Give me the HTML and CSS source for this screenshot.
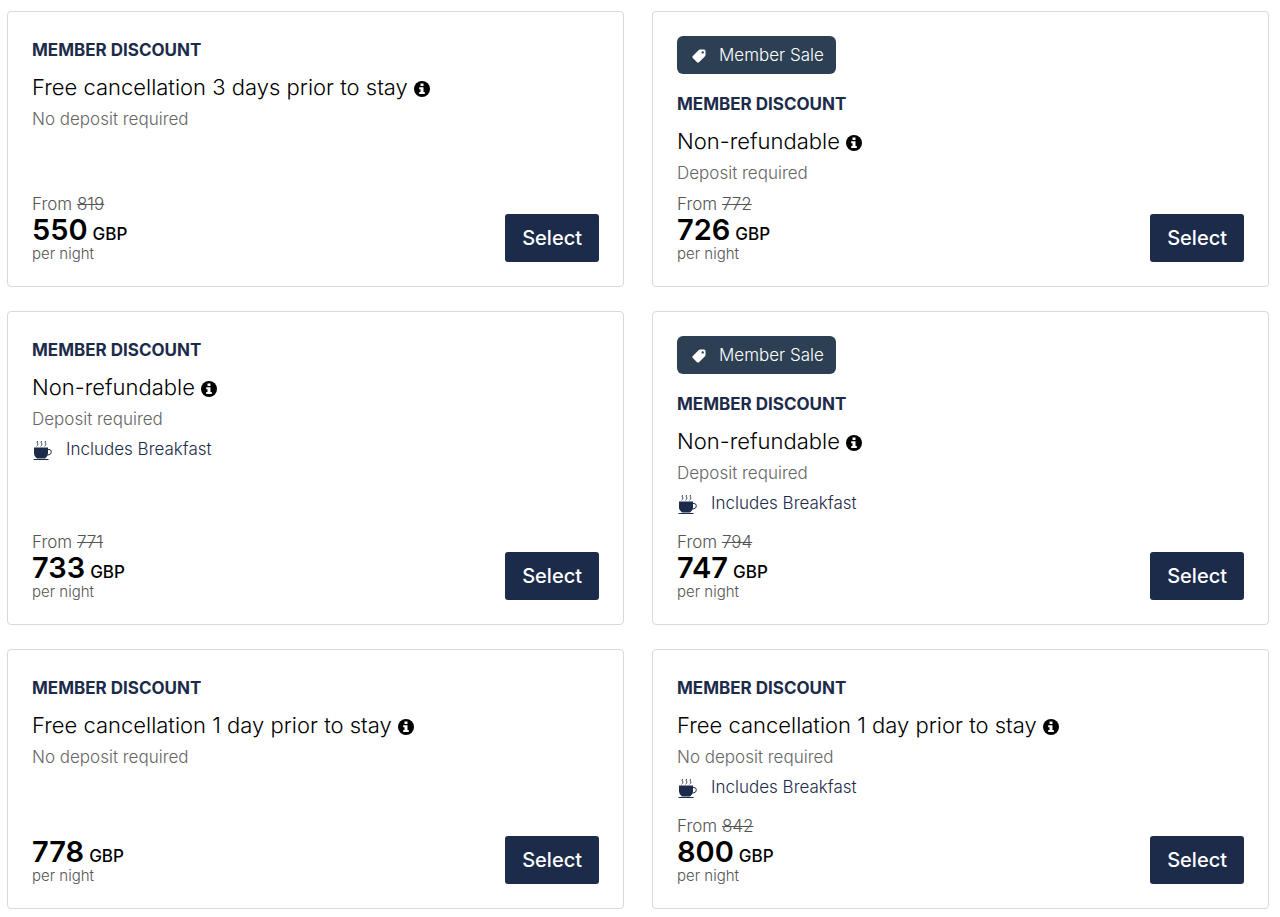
FILE: index.html
```html
<!DOCTYPE html>
<html lang="en">
<head>
<meta charset="utf-8">
<meta name="viewport" content="width=device-width, initial-scale=1">
<title>Room rates</title>
<link rel="stylesheet" href="styles.css">
</head>
<body>
<svg class="sprite" aria-hidden="true">
  <symbol id="info" viewBox="0 0 16 16">
    <circle cx="8" cy="8" r="8" fill="#000"/>
    <path d="M6.500 2.500h3v2.400h-3zM5.200 6.200h4.300v4.900h1.300v2H5.200v-2h1.300V8.200H5.200z" fill="#fff"/>
  </symbol>
  <symbol id="tag" viewBox="0 0 14 14">
    <path fill="#fff" fill-rule="evenodd" d="M8 .6h4q1.500 0 1.500 1.500v4q0 .6-.5 1.200l-6 6q-1 .9-2 0L.8 9q-.9-1 0-2l6-6Q7.300.6 8 .6ZM10.700 2.200a1.200 1.200 0 1 0 0 2.400 1.200 1.200 0 0 0 0-2.400Z"/>
  </symbol>
  <symbol id="cup" viewBox="0 0 20 20">
    <path fill="#1c2b4a" d="M2 7.500h14v6q0 3-3 5h-8Q2 16.500 2 13.500ZM1.500 19h15v1h-15Z"/>
    <path fill="none" stroke="#1c2b4a" d="M16 9.500h1q2.300 0 2.300 2.400t-2.300 2.800l-1.500.5"/>
    <path fill="none" stroke="#1c2b4a" stroke-width=".9" d="M4.500 6.200q2.200-1.400 1.200-2.700T5.500 1M8.500 6.200q2.200-1.400 1.200-2.700T9.500 1M12.500 6.200q2.200-1.400 1.200-2.700T13.500 1"/>
  </symbol>
</svg>
<main class="rates">
  <article class="card">
    <p class="discount">MEMBER DISCOUNT</p>
    <h2 class="title">Free cancellation 3 days prior to stay <svg class="info" aria-hidden="true"><use href="#info"/></svg></h2>
    <p class="deposit">No deposit required</p>
    <div class="footer">
      <div><p class="from">From <s>819</s></p><p class="price"><strong>550</strong> GBP</p><p class="night">per night</p></div>
      <button class="select" type="button">Select</button>
    </div>
  </article>
  <article class="card">
    <p class="badge"><svg class="tag" aria-hidden="true"><use href="#tag"/></svg>Member Sale</p>
    <p class="discount">MEMBER DISCOUNT</p>
    <h2 class="title">Non-refundable <svg class="info" aria-hidden="true"><use href="#info"/></svg></h2>
    <p class="deposit">Deposit required</p>
    <div class="footer">
      <div><p class="from">From <s>772</s></p><p class="price"><strong>726</strong> GBP</p><p class="night">per night</p></div>
      <button class="select" type="button">Select</button>
    </div>
  </article>
  <article class="card">
    <p class="discount">MEMBER DISCOUNT</p>
    <h2 class="title">Non-refundable <svg class="info" aria-hidden="true"><use href="#info"/></svg></h2>
    <p class="deposit">Deposit required</p>
    <p class="breakfast"><svg class="cup" aria-hidden="true"><use href="#cup"/></svg>Includes Breakfast</p>
    <div class="footer">
      <div><p class="from">From <s>771</s></p><p class="price"><strong>733</strong> GBP</p><p class="night">per night</p></div>
      <button class="select" type="button">Select</button>
    </div>
  </article>
  <article class="card">
    <p class="badge"><svg class="tag" aria-hidden="true"><use href="#tag"/></svg>Member Sale</p>
    <p class="discount">MEMBER DISCOUNT</p>
    <h2 class="title">Non-refundable <svg class="info" aria-hidden="true"><use href="#info"/></svg></h2>
    <p class="deposit">Deposit required</p>
    <p class="breakfast"><svg class="cup" aria-hidden="true"><use href="#cup"/></svg>Includes Breakfast</p>
    <div class="footer">
      <div><p class="from">From <s>794</s></p><p class="price"><strong>747</strong> GBP</p><p class="night">per night</p></div>
      <button class="select" type="button">Select</button>
    </div>
  </article>
  <article class="card">
    <p class="discount">MEMBER DISCOUNT</p>
    <h2 class="title">Free cancellation 1 day prior to stay <svg class="info" aria-hidden="true"><use href="#info"/></svg></h2>
    <p class="deposit">No deposit required</p>
    <div class="footer">
      <div><p class="price"><strong>778</strong> GBP</p><p class="night">per night</p></div>
      <button class="select" type="button">Select</button>
    </div>
  </article>
  <article class="card">
    <p class="discount">MEMBER DISCOUNT</p>
    <h2 class="title">Free cancellation 1 day prior to stay <svg class="info" aria-hidden="true"><use href="#info"/></svg></h2>
    <p class="deposit">No deposit required</p>
    <p class="breakfast"><svg class="cup" aria-hidden="true"><use href="#cup"/></svg>Includes Breakfast</p>
    <div class="footer">
      <div><p class="from">From <s>842</s></p><p class="price"><strong>800</strong> GBP</p><p class="night">per night</p></div>
      <button class="select" type="button">Select</button>
    </div>
  </article>
</main>
</body>
</html>
```
FILE: styles.css
```css
* { box-sizing: border-box; }
body { margin: 0; background: #fff; color: #000; font-family: Inter, "Liberation Sans", sans-serif; font-size: 17px; font-weight: 300; }
p, h2 { margin: 0; }
.sprite { display: none; }
.rates { display: grid; grid-template-columns: 1fr 1fr; gap: 24px 28px; padding: 11px 11px 8px 7px; }
.card { display: flex; flex-direction: column; align-items: flex-start; padding: 24px; border: 1px solid #d9d9d9; border-radius: 4px; }
.badge { display: flex; align-items: center; gap: 13px; height: 38px; margin-bottom: 16px; padding: 0 12px 0 15px; border-radius: 6px; background: #2d4053; color: #fff; }
.tag { width: 14px; height: 14px; margin-top: 2px; }
.discount { color: #1c2b4a; font-size: 17px; font-weight: 700; line-height: 28px; }
.title { margin-top: 7px; font-size: 22px; font-weight: 300; line-height: 32px; }
.info { width: 16px; height: 16px; vertical-align: -2px; }
.deposit { color: #666; line-height: 32px; }
.breakfast { display: flex; align-items: center; gap: 14px; margin-bottom: 10px; color: #1c2b4a; line-height: 28px; }
.cup { width: 20px; height: 20px; margin-top: 2px; }
.footer { display: flex; align-items: flex-end; justify-content: space-between; align-self: stretch; margin-top: auto; padding-top: 3px; }
.from { color: #555; line-height: 24px; }
.price { display: flex; align-items: baseline; gap: 5px; height: 30px; font-size: 17px; font-weight: 500; line-height: 20px; }
.price strong { font-size: 29px; font-weight: 600; line-height: 28px; }
.night { color: #555; font-size: 15px; line-height: 16px; }
.select { height: 48px; padding: 0 17px; border: 0; border-radius: 3px; background: #1c2b4a; color: #fff; font: 500 20px Inter, "Liberation Sans", sans-serif; }
```
